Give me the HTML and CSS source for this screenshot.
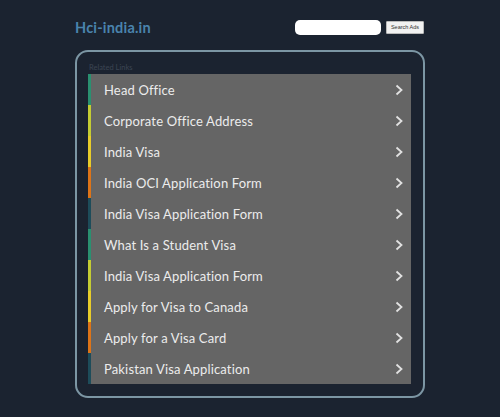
FILE: index.html
```html
<!DOCTYPE html>
<html>
<head>
<meta charset="utf-8">
<link rel="stylesheet" href="styles.css">
</head>
<body>
<div class="page">
  <header class="top">
    <div class="logo">Hci-india.in</div>
    <form class="search">
      <input class="search-input" type="text">
      <button class="search-btn" type="button">Search Ads</button>
    </form>
  </header>
  <section class="box">
    <div class="label">Related Links</div>
    <ul class="links">
      <li class="row c-green"><span>Head Office</span><svg class="chev" viewBox="0 0 8 12"><path d="M1.5 1.5 L6.5 6 L1.5 10.5"/></svg></li>
      <li class="row c-lime"><span>Corporate Office Address</span><svg class="chev" viewBox="0 0 8 12"><path d="M1.5 1.5 L6.5 6 L1.5 10.5"/></svg></li>
      <li class="row c-yellow"><span>India Visa</span><svg class="chev" viewBox="0 0 8 12"><path d="M1.5 1.5 L6.5 6 L1.5 10.5"/></svg></li>
      <li class="row c-orange"><span>India OCI Application Form</span><svg class="chev" viewBox="0 0 8 12"><path d="M1.5 1.5 L6.5 6 L1.5 10.5"/></svg></li>
      <li class="row c-teal"><span>India Visa Application Form</span><svg class="chev" viewBox="0 0 8 12"><path d="M1.5 1.5 L6.5 6 L1.5 10.5"/></svg></li>
      <li class="row c-green"><span>What Is a Student Visa</span><svg class="chev" viewBox="0 0 8 12"><path d="M1.5 1.5 L6.5 6 L1.5 10.5"/></svg></li>
      <li class="row c-lime"><span>India Visa Application Form</span><svg class="chev" viewBox="0 0 8 12"><path d="M1.5 1.5 L6.5 6 L1.5 10.5"/></svg></li>
      <li class="row c-yellow"><span>Apply for Visa to Canada</span><svg class="chev" viewBox="0 0 8 12"><path d="M1.5 1.5 L6.5 6 L1.5 10.5"/></svg></li>
      <li class="row c-orange"><span>Apply for a Visa Card</span><svg class="chev" viewBox="0 0 8 12"><path d="M1.5 1.5 L6.5 6 L1.5 10.5"/></svg></li>
      <li class="row c-teal"><span>Pakistan Visa Application</span><svg class="chev" viewBox="0 0 8 12"><path d="M1.5 1.5 L6.5 6 L1.5 10.5"/></svg></li>
    </ul>
  </section>
</div>
</body>
</html>
```
FILE: styles.css
```css
html, body {
  margin: 0;
  padding: 0;
  background: #1b2330;
  font-family: Lato, "Open Sans", sans-serif;
}
.page {
  width: 350px;
  margin-left: 75px;
}
.top {
  display: flex;
  justify-content: space-between;
  align-items: center;
  padding-top: 20px;
  height: 15px;
}
.logo {
  color: #4a83ad;
  font-weight: bold;
  font-size: 14.5px;
  line-height: 15px;
  letter-spacing: 0.2px;
}
.search {
  display: flex;
  align-items: center;
  gap: 5px;
  margin: 0;
  margin-right: 1px;
}
.search-input {
  box-sizing: border-box;
  width: 86px;
  height: 15px;
  border: none;
  border-radius: 5px;
  background: #ffffff;
  padding: 0;
  margin: 0;
}
.search-btn {
  box-sizing: border-box;
  width: 38px;
  height: 13px;
  padding: 0;
  margin: 0;
  border: 1px solid #b9b9b9;
  border-radius: 1px;
  background: #f1f1f1;
  color: #333;
  font-family: "Liberation Sans", sans-serif;
  font-size: 5.5px;
  line-height: 11px;
}
.box {
  margin-top: 15px;
  border: 2px solid #7c96a4;
  border-radius: 13px;
  padding: 10px 12px 12px 11px;
}
.label {
  color: #3b4553;
  font-size: 7.5px;
  line-height: 11px;
  height: 12px;
  padding-left: 1px;
}
.links {
  list-style: none;
  margin: 0;
  padding: 0;
  background: #656565;
}
.row {
  display: flex;
  align-items: center;
  justify-content: space-between;
  height: 31px;
  border-left: 3px solid #2a9070;
  padding: 0 8px 0 13px;
  color: #ececec;
  font-size: 13px;
  letter-spacing: 0.15px;
}
.c-green { border-left-color: #2a9070; }
.c-lime { border-left-color: #c4cc33; }
.c-yellow { border-left-color: #e8cc2a; }
.c-orange { border-left-color: #dd7418; }
.c-teal { border-left-color: #1d4c5a; }
.chev {
  width: 8px;
  height: 12px;
  fill: none;
  stroke: #e2e2e2;
  stroke-width: 1.8;
}
```
